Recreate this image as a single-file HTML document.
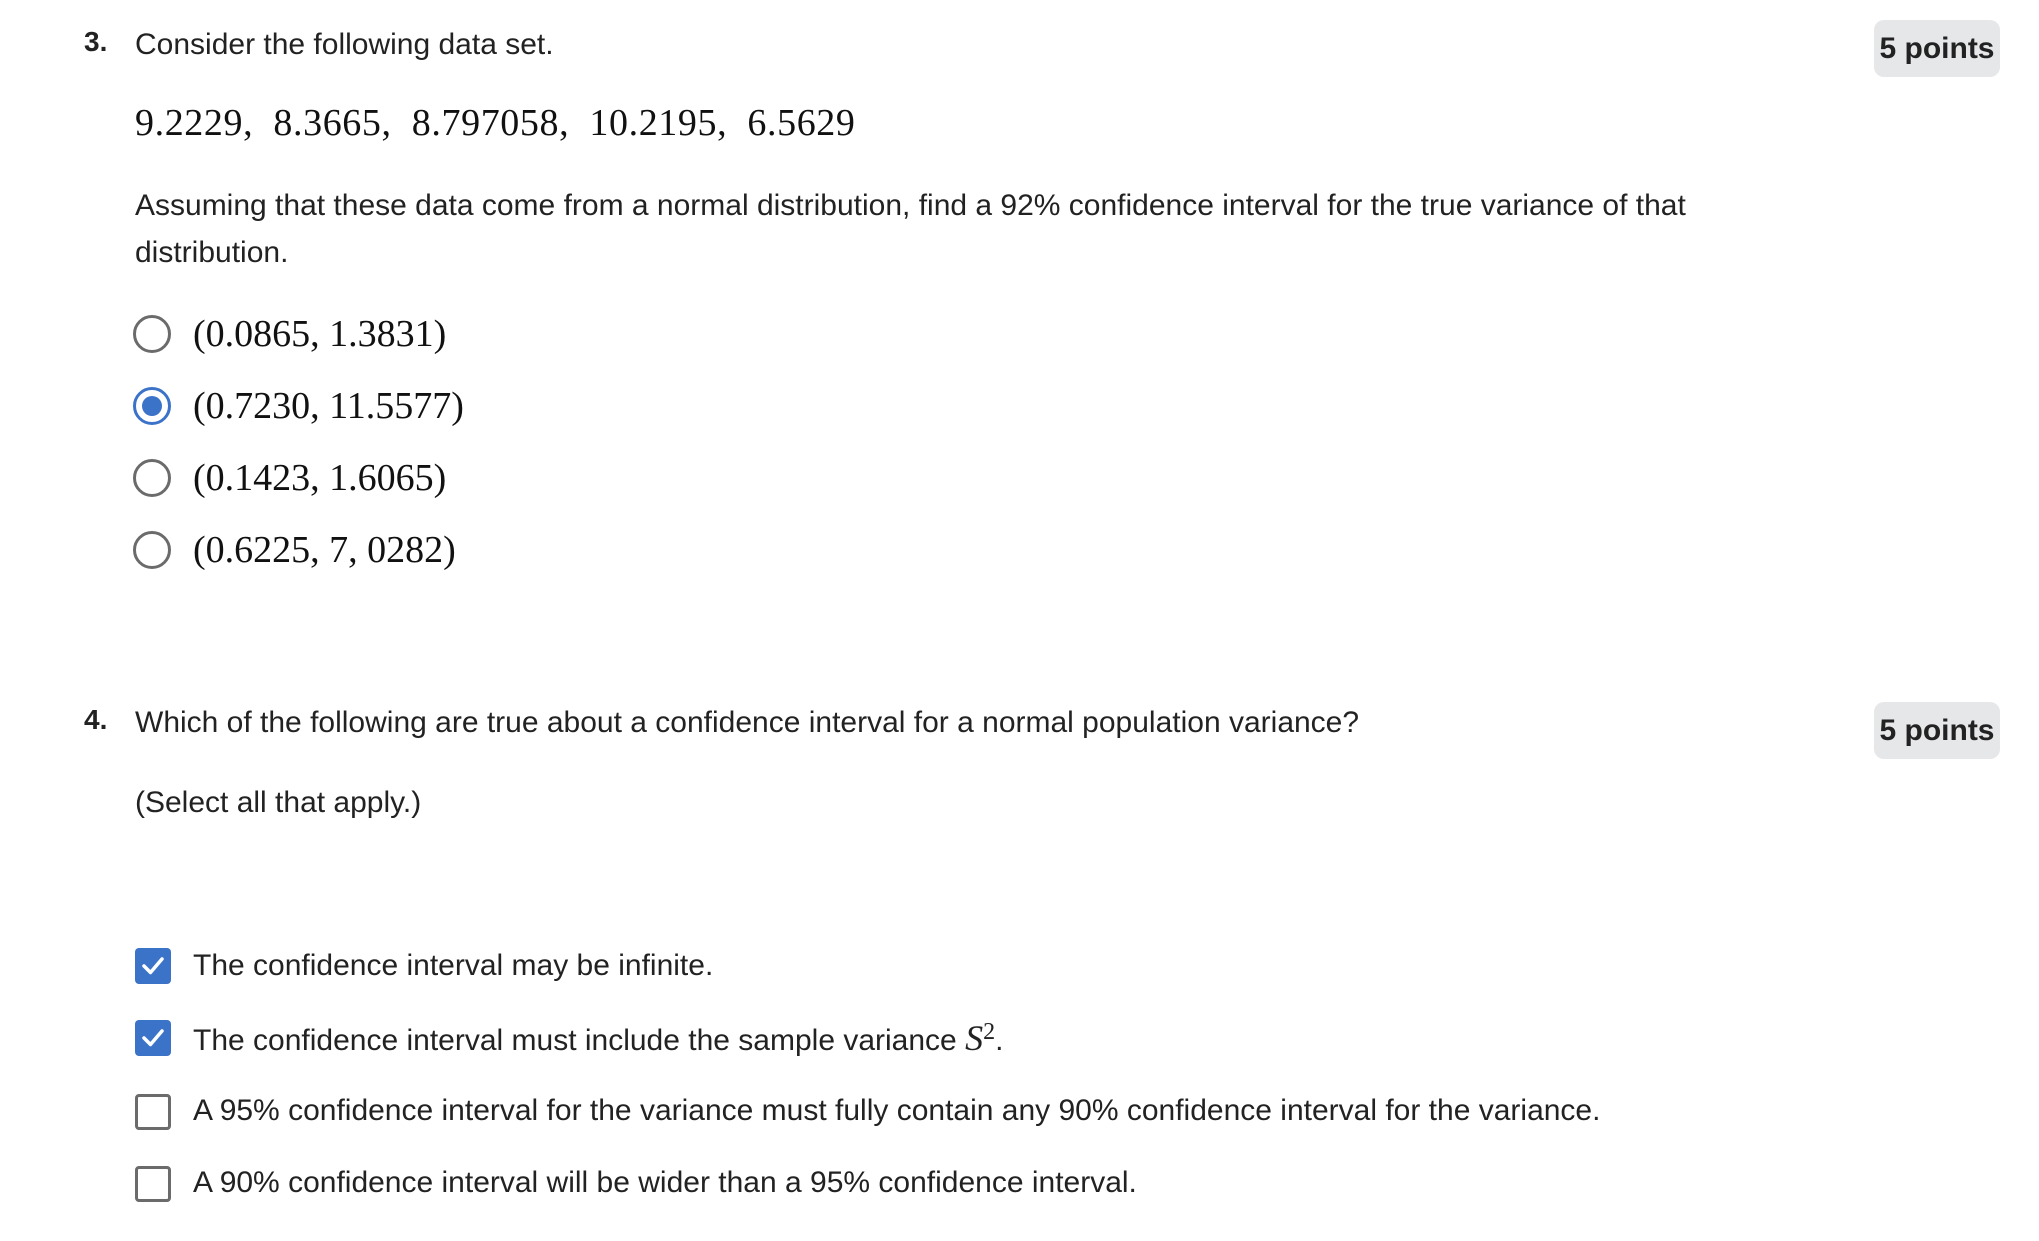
<!DOCTYPE html>
<html><head><meta charset="utf-8"><style>
html,body{margin:0;padding:0;background:#fff;width:2039px;height:1241px;overflow:hidden}
body{position:relative;font-family:"Liberation Sans",sans-serif;color:#222;}
.t{position:absolute;white-space:nowrap;font-size:30px;line-height:1;transform:translateY(-50%)}
.m{font-family:"Liberation Serif",serif;font-size:38px;color:#111}
.num{font-weight:bold;font-size:28px}
.badge{position:absolute;background:#e6e7e9;border-radius:10px;width:126px;height:57px;font-weight:bold;font-size:30px;display:flex;align-items:center;justify-content:center;color:#222}
.r{position:absolute;width:32px;height:32px;border:3.5px solid #6b6b6b;border-radius:50%;transform:translate(-50%,-50%)}
.r.on{border-color:#3b73c9}
.r.on::after{content:"";position:absolute;left:50%;top:50%;width:20px;height:20px;margin:-10px 0 0 -10px;border-radius:50%;background:#3b73c9}
.c{position:absolute;width:36px;height:36px;box-sizing:border-box;border-radius:4px;transform:translateY(-50%)}
.c.off{border:3.5px solid #6b6b6b}
.c.on{background:#3b73c9}
</style></head><body>
<div class="t num" style="left:84px;top:42px">3.</div>
<div class="t" style="left:135px;top:45px">Consider the following data set.</div>
<div class="badge" style="left:1874px;top:20px">5 points</div>
<div class="t m" style="left:135px;top:123px;letter-spacing:0.6px">9.2229,&nbsp; 8.3665,&nbsp; 8.797058,&nbsp; 10.2195,&nbsp; 6.5629</div>
<div class="t" style="left:135px;top:206px">Assuming that these data come from a normal distribution, find a 92% confidence interval for the true variance of that</div>
<div class="t" style="left:135px;top:253px">distribution.</div>

<div class="r" style="left:152px;top:334px"></div>
<div class="t m" style="left:193px;top:334px">(0.0865, 1.3831)</div>
<div class="r on" style="left:152px;top:406px"></div>
<div class="t m" style="left:193px;top:406px">(0.7230, 11.5577)</div>
<div class="r" style="left:152px;top:478px"></div>
<div class="t m" style="left:193px;top:478px">(0.1423, 1.6065)</div>
<div class="r" style="left:152px;top:550px"></div>
<div class="t m" style="left:193px;top:550px">(0.6225, 7, 0282)</div>

<div class="t num" style="left:84px;top:720px">4.</div>
<div class="t" style="left:135px;top:723px">Which of the following are true about a confidence interval for a normal population variance?</div>
<div class="badge" style="left:1874px;top:702px">5 points</div>
<div class="t" style="left:135px;top:803px">(Select all that apply.)</div>

<div class="c on" style="left:135px;top:966px"><svg width="36" height="36" viewBox="0 0 36 36"><path d="M9 18 L15.5 24.5 L27 11" fill="none" stroke="#fff" stroke-width="3.5" stroke-linecap="round" stroke-linejoin="round"/></svg></div>
<div class="t" style="left:193px;top:966px">The confidence interval may be infinite.</div>
<div class="c on" style="left:135px;top:1038px"><svg width="36" height="36" viewBox="0 0 36 36"><path d="M9 18 L15.5 24.5 L27 11" fill="none" stroke="#fff" stroke-width="3.5" stroke-linecap="round" stroke-linejoin="round"/></svg></div>
<div class="t" style="left:193px;top:1038px">The confidence interval must include the sample variance <span style="font-family:'Liberation Serif',serif;font-style:italic;font-size:36px">S</span><sup style="font-family:'Liberation Serif',serif;font-size:24px">2</sup>.</div>
<div class="c off" style="left:135px;top:1112px"></div>
<div class="t" style="left:193px;top:1111px">A 95% confidence interval for the variance must fully contain any 90% confidence interval for the variance.</div>
<div class="c off" style="left:135px;top:1184px"></div>
<div class="t" style="left:193px;top:1183px">A 90% confidence interval will be wider than a 95% confidence interval.</div>
</body></html>
